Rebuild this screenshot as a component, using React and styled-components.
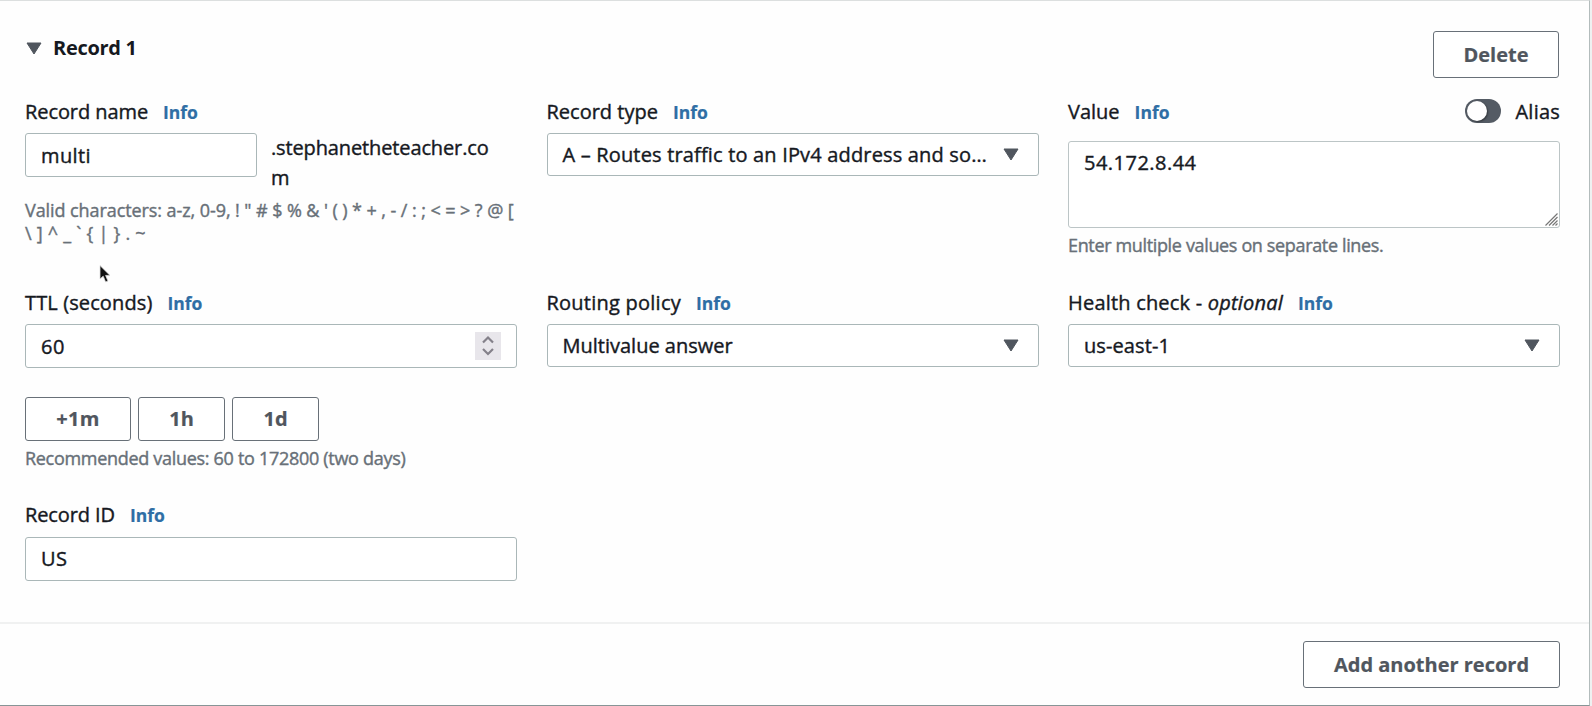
import React from 'react';
import styled, { createGlobalStyle } from 'styled-components';

const GlobalStyle = createGlobalStyle`
  *, *::before, *::after { box-sizing: border-box; }
  body {
    margin: 0;
    overflow: hidden;
    background: #eef1f1;
    color: #16191f;
    font-family: "Open Sans", "Noto Sans", sans-serif;
    font-size: 20px;
    line-height: 30px;
    -webkit-text-stroke: 0.4px currentColor;
  }
`;

const Panel = styled.main`
  position: relative;
  display: flex;
  flex-direction: column;
  width: 1590px;
  height: 706px;
  background: #fefefe;
  border-top: 1px solid #dcdfdf;
  border-right: 1px solid #b3bcbc;
  border-bottom: 1px solid #879596;
`;

const Header = styled.header`
  display: flex;
  justify-content: space-between;
  align-items: flex-start;
  height: 95px;
  padding: 30px 30px 0 26px;
`;

const Title = styled.h2`
  display: flex;
  align-items: center;
  gap: 11px;
  margin: 2px 0 0;
  font-size: 20px;
  font-weight: 700;
  letter-spacing: -0.3px;
  -webkit-text-stroke: 0;
`;

const Button = styled.button`
  height: ${(p) => (p.$small ? 44 : 47)}px;
  width: ${(p) => p.$width}px;
  padding: 0;
  border: 1px solid #687078;
  border-radius: 3px;
  background: #fff;
  color: #50565e;
  font: 700 20px/30px "Open Sans", sans-serif;
  letter-spacing: ${(p) => p.$track || 0}px;
  -webkit-text-stroke: 0.2px currentColor;
`;

const Fields = styled.section`
  display: grid;
  grid-template-columns: repeat(3, 492px);
  column-gap: 29.5px;
  row-gap: 30px;
  height: 526px;
  padding-left: 25px;
  align-content: start;
`;

const Field = styled.div`
  min-height: ${(p) => p.$minHeight || 0}px;
  min-width: 0;
`;

const LabelRow = styled.div`
  display: flex;
  align-items: baseline;
  height: 30px;
  padding-top: ${(p) => p.$drop}px;
  margin-bottom: ${(p) => p.$space || 7}px;
  white-space: pre;
`;

const Label = styled.label`
  letter-spacing: ${(p) => p.$track || 0}px;
`;

const InfoLink = styled.a`
  margin-left: 15px;
  color: #2f6ea5;
  font-size: 17.5px;
  font-weight: 700;
  -webkit-text-stroke: 0.2px currentColor;
`;

const Control = styled.div`
  display: flex;
  align-items: center;
  justify-content: space-between;
  width: ${(p) => (p.$width ? `${p.$width}px` : '100%')};
  height: ${(p) => p.$height || 44}px;
  padding: 0 ${(p) => p.$right || 19}px 0 15px;
  border: 1px solid #aab7b8;
  border-radius: 3px;
  background: #fff;
  white-space: nowrap;
`;

const Text = styled.span`
  padding-top: ${(p) => p.$drop || 0}px;
  letter-spacing: ${(p) => p.$track || 0}px;
`;

const Area = styled.div`
  display: flex;
  justify-content: space-between;
  height: 87px;
  padding: 5.5px 1px 1px 15px;
  border: 1px solid #bcc5c6;
  border-radius: 3px;
  background: #fff;
  svg { align-self: flex-end; }
`;

const NameRow = styled.div`
  display: flex;
  gap: 14px;
`;

const Suffix = styled.div`
  width: 222px;
  letter-spacing: -0.13px;
  word-break: break-all;
`;

const Hint = styled.p`
  margin: ${(p) => p.$space || 6}px 0 0;
  color: #687078;
  font-size: 18px;
  line-height: 23px;
  letter-spacing: ${(p) => p.$track || 0}px;
  white-space: pre;
`;

const Stepper = styled.span`
  display: flex;
  align-items: center;
  justify-content: center;
  width: 26px;
  height: 28px;
  background: #e8e6eb;
`;

const Presets = styled.div`
  display: flex;
  gap: 7px;
  margin-top: 29px;
`;

const Alias = styled.div`
  display: flex;
  align-items: baseline;
  gap: 15px;
  margin-left: auto;
  letter-spacing: 0.22px;
`;

const Toggle = styled.span`
  display: flex;
  align-items: center;
  align-self: center;
  width: 36px;
  height: 24px;
  margin-top: -2px;
  padding: 2px;
  border-radius: 12px;
  background: #545b64;
  &::before {
    content: "";
    width: 20px;
    height: 20px;
    border-radius: 50%;
    background: #fff;
    box-shadow: 1px 1px 2px rgba(0, 0, 0, 0.4);
  }
`;

const Footer = styled.footer`
  display: flex;
  flex: 1;
  justify-content: flex-end;
  align-items: flex-start;
  padding: 17px 29px 0 0;
  border-top: 2px solid #f0f1f1;
`;

const Pointer = styled.svg`
  position: absolute;
  left: 99px;
  top: 263px;
`;

const Caret = () => (
  <svg width="16" height="13" viewBox="0 0 16 13">
    <path d="M1 1H15L8 12Z" fill="#50565e" stroke="#50565e" strokeLinejoin="round" />
  </svg>
);

const Grip = () => (
  <svg width="13" height="13" viewBox="0 0 13 13">
    <path d="M0.5 12.5 12.5 0.5M4 12.5 12.5 4M7.5 12.5 12.5 7.5M10.5 12.5 12.5 10.5" stroke="#777" strokeWidth="1.2" fill="none" />
  </svg>
);

const Chevrons = () => (
  <svg width="14" height="22" viewBox="0 0 14 22">
    <path d="M2 7.5 7 2.5 12 7.5M2 14 7 19 12 14" stroke="#84818a" strokeWidth="2.2" fill="none" />
  </svg>
);

const FieldLabel = ({ text, track, space, drop = 1, children, extra }) => (
  <LabelRow $space={space} $drop={drop}>
    <Label $track={track}>{text}{children}</Label>
    <InfoLink>Info</InfoLink>
    {extra}
  </LabelRow>
);

const Select = ({ value, track }) => (
  <Control $height={43}>
    <Text $track={track}>{value}</Text>
    <Caret />
  </Control>
);

export default function App() {
  return (
    <>
      <GlobalStyle />
      <Panel>
        <Header>
          <Title><Caret />Record 1</Title>
          <Button $width={126}>Delete</Button>
        </Header>
        <Fields>
          <Field $minHeight={161}>
            <FieldLabel text="Record name" track={-0.08} />
            <NameRow>
              <Control $width={232}><Text $track={0.4} $drop={2}>multi</Text></Control>
              <Suffix>.stephanetheteacher.co<br />m</Suffix>
            </NameRow>
            <Hint $track={-0.08}>
              {'Valid characters: a-z, 0-9, ! " # $ % & \' ( ) * + , - / : ; < = > ? @ ['}
              <br />
              <Text $track={0.25}>{'\\ ] ^ _ ` { | } . ~'}</Text>
            </Hint>
          </Field>
          <Field>
            <FieldLabel text="Record type" />
            <Select value="A – Routes traffic to an IPv4 address and so…" track={0.17} />
          </Field>
          <Field>
            <FieldLabel text="Value" space={15} extra={<Alias><Toggle />Alias</Alias>} />
            <Area><Text $track={0.48}>54.172.8.44</Text><Grip /></Area>
            <Hint $track={-0.35}>Enter multiple values on separate lines.</Hint>
          </Field>

          <Field $minHeight={183}>
            <FieldLabel text="TTL (seconds)" track={0.12} />
            <Control $right={15}><Text $track={0.6} $drop={2}>60</Text><Stepper><Chevrons /></Stepper></Control>
            <Presets>
              <Button $small $width={106} $track={0.3}>+1m</Button>
              <Button $small $width={87}>1h</Button>
              <Button $small $width={87}>1d</Button>
            </Presets>
            <Hint $track={-0.3}>Recommended values: 60 to 172800 (two days)</Hint>
          </Field>
          <Field>
            <FieldLabel text="Routing policy" track={0.24} />
            <Select value="Multivalue answer" />
          </Field>
          <Field>
            <FieldLabel text="Health check - " track={0.2}><em>optional</em></FieldLabel>
            <Select value="us-east-1" track={0.1} />
          </Field>

          <Field>
            <FieldLabel text="Record ID" track={-0.1} drop={0} />
            <Control><Text $track={0.3}>US</Text></Control>
          </Field>
        </Fields>
        <Footer>
          <Button $width={257}>Add another record</Button>
        </Footer>
        <Pointer width="12" height="20" viewBox="0 0 12 20">
          <path d="M1 1.5V15L4.2 12.2 6.6 18 9 17 6.6 11.4H11Z" fill="#111" stroke="#ddd" strokeWidth=".8" />
        </Pointer>
      </Panel>
    </>
  );
}
